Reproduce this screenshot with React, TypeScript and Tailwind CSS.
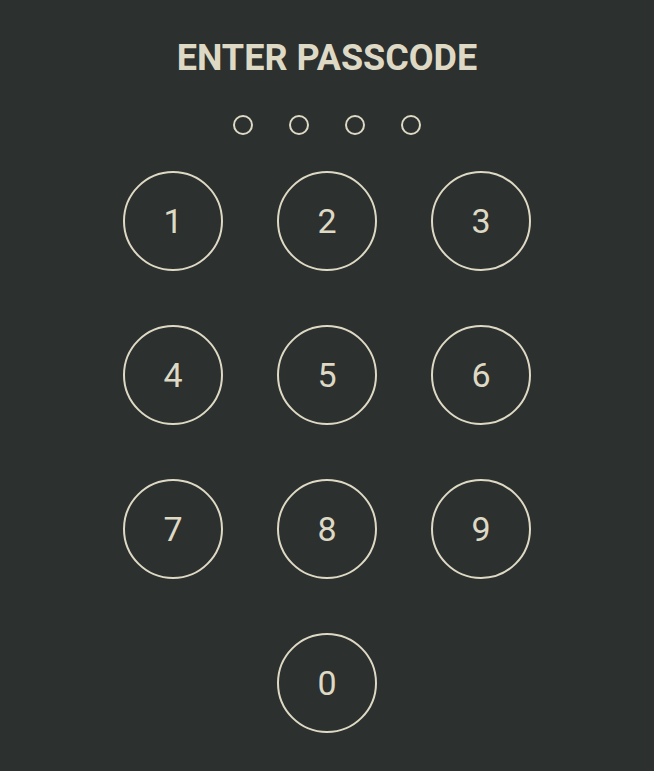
import React from "react";

export default function App() {
  const keys = ["1", "2", "3", "4", "5", "6", "7", "8", "9"];
  return (
    <div
      className="min-h-[771px] w-full bg-[#2c302f] flex flex-col items-center pt-[38px] text-[#ded9c4]"
      style={{ fontFamily: "Roboto, 'Noto Sans', sans-serif" }}
    >
      <h1 className="text-[36px] leading-[40px] font-bold">ENTER PASSCODE</h1>
      <div className="mt-[37px] flex gap-[36px]">
        {[0, 1, 2, 3].map((i) => (
          <div key={i} className="w-[20px] h-[20px] rounded-full border-2 border-[#ded9c4]" />
        ))}
      </div>
      <div className="mt-[36px] grid grid-cols-[100px_100px_100px] gap-[54px]">
        {keys.map((k) => (
          <button
            key={k}
            className="w-[100px] h-[100px] rounded-full border-2 border-[#ded9c4] flex items-center justify-center text-[34px] font-normal"
          >
            {k}
          </button>
        ))}
        <div />
        <button className="w-[100px] h-[100px] rounded-full border-2 border-[#ded9c4] flex items-center justify-center text-[34px] font-normal">
          0
        </button>
        <div />
      </div>
    </div>
  );
}
